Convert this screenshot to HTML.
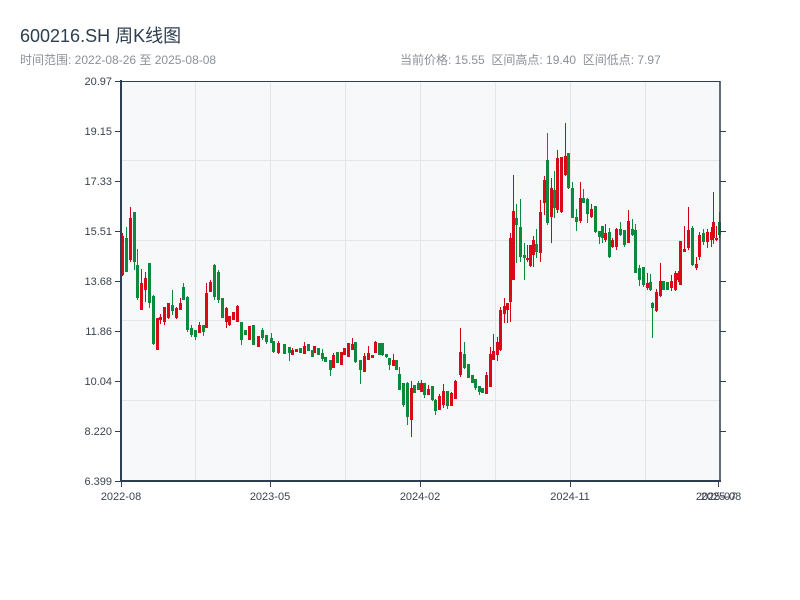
<!DOCTYPE html>
<html><head><meta charset="utf-8"><style>
html,body{margin:0;padding:0;background:#fff;width:800px;height:600px;overflow:hidden}
body{font-family:"Liberation Sans","Noto Sans CJK SC",sans-serif}
.t{position:absolute;left:20px;top:22px;font-size:18px;color:#2c3e50}
.s{position:absolute;top:51px;font-size:12px;color:#8a9199}
</style></head><body>
<div class="t">600216.SH 周K线图</div>
<div class="s" style="left:20px">时间范围: 2022-08-26 至 2025-08-08</div>
<div class="s" style="left:400px">当前价格: 15.55 &nbsp;区间高点: 19.40 &nbsp;区间低点: 7.97</div>
<svg width="800" height="600" style="position:absolute;left:0;top:0" xmlns="http://www.w3.org/2000/svg">
<rect x="121" y="81" width="599" height="400" fill="#f7f8fa"/>
<g stroke="#e2e5ea" stroke-width="1">
<line x1="195.5" y1="81" x2="195.5" y2="481"/><line x1="270.5" y1="81" x2="270.5" y2="481"/>
<line x1="345.5" y1="81" x2="345.5" y2="481"/><line x1="420.5" y1="81" x2="420.5" y2="481"/>
<line x1="495.5" y1="81" x2="495.5" y2="481"/><line x1="570.5" y1="81" x2="570.5" y2="481"/>
<line x1="645.5" y1="81" x2="645.5" y2="481"/>
<line x1="121" y1="160.5" x2="720" y2="160.5"/><line x1="121" y1="240.5" x2="720" y2="240.5"/>
<line x1="121" y1="320.5" x2="720" y2="320.5"/><line x1="121" y1="400.5" x2="720" y2="400.5"/>
</g>
<g fill="none" transform="translate(0.5,0)">
<path stroke="#d0021b" stroke-width="1" d="M122 233V276M130 207V262M141 269V310M145 272V302M157 318V350M160 314V324M164 307V325M168 303V319M176 307V319M180 298V310M199 322V333M206 283V328M210 280V292M226 307V328M229 316V326M233 312V320M237 305V322M249 326V340M258 336V347M278 341V354M292 348V355M296 349V352M304 342V354M314 346V353M333 353V368M341 352V365M344 348V355M348 343V357M352 338V350M364 353V372M368 346V360M372 355V358M375 341V353M393 354V366M411 381V437M421 380V392M428 385V395M439 394V410M443 384V408M451 392V406M455 380V399M460 328V377M486 372V394M490 347V387M493 334V360M497 337V361M500 307V351M504 298V323M507 303V323M510 233V322M513 175V280M527 245V262M530 245V267M533 236V267M540 200V262M544 176V215M551 178V243M557 150V213M561 157V213M565 123V176M580 182V223M591 204V218M605 224V242M612 238V248M616 228V250M628 210V243M647 273V290M656 289V312M660 263V297M671 275V291M675 271V291M678 271V282M680 241V285M684 226V252M688 207V250M696 257V270M699 232V260M707 229V248M711 227V247M713 192V244M716 226V241"/>
<path stroke="#d9091a" stroke-width="3" d="M122 236V275M130 218V260M141 283V310M145 278V290M157 318V350M160 317V320M164 307V322M168 303V318M176 308V318M180 303V310M199 325V333M206 293V328M210 282V292M226 308V322M229 316V325M233 312V320M237 306V322M249 326V340M258 336V347M278 343V353M292 350V355M296 349V352M304 346V354M314 346V353M333 355V368M341 352V365M344 348V355M348 343V357M352 344V350M364 356V372M368 353V360M372 355V358M375 342V353M393 360V366M411 388V420M421 383V392M428 389V395M439 396V410M443 391V405M451 393V406M455 381V399M460 352V375M486 375V394M490 354V387M493 351V360M497 342V355M500 310V350M504 306V314M507 303V310M510 238V302M513 211V280M527 258V260M530 245V266M533 240V255M540 212V253M544 180V203M551 188V217M557 158V210M561 157V212M565 156V175M580 198V221M591 209V217M605 233V240M612 240V247M616 229V247M628 221V243M647 283V288M656 292V311M660 281V296M671 281V288M675 273V290M678 273V280M680 241V285M684 249V252M688 230V248M696 264V268M699 235V257M707 232V242M711 232V240M713 222V238M716 238V240"/>
<path stroke="#0a8a3a" stroke-width="1" d="M126 227V272M134 212V270M137 249V300M149 263V308M153 295V345M172 290V315M183 283V300M187 296V332M191 325V337M195 330V340M203 325V336M214 264V300M218 270V303M222 298V318M241 322V345M245 330V335M253 325V345M262 328V340M266 335V344M271 333V343M273 341V353M284 344V354M289 347V361M300 348V353M308 344V351M312 350V357M318 348V355M322 349V361M325 357V362M330 360V376M337 352V363M355 342V363M360 360V384M379 343V355M382 343V356M386 354V358M389 358V370M396 360V370M399 367V390M403 383V407M407 382V425M414 385V393M418 381V390M424 383V398M432 386V401M435 399V415M447 391V409M464 342V369M468 364V378M472 375V383M475 379V390M479 386V395M482 388V393M516 204V263M520 199V262M524 243V280M536 229V258M547 133V225M554 171V218M568 153V189M572 182V218M576 209V231M583 189V203M587 198V223M595 206V233M599 231V244M602 226V243M609 228V258M620 222V236M624 230V247M632 219V236M635 224V273M639 265V286M643 267V287M650 274V291M652 302V338M663 281V290M667 282V290M692 226V266M703 229V245M719 212V238"/>
<path stroke="#0a8a3a" stroke-width="3" d="M126 238V272M134 212V262M137 265V298M149 263V303M153 296V344M172 305V311M183 287V300M187 297V330M191 328V335M195 330V337M203 325V332M214 265V297M218 272V300M222 298V318M241 322V340M245 330V335M253 325V345M262 330V338M266 335V342M271 338V343M273 341V352M284 344V354M289 347V353M300 348V353M308 344V351M312 350V357M318 348V355M322 353V359M325 357V362M330 360V370M337 352V363M355 342V362M360 360V370M379 343V355M382 343V355M386 354V357M389 358V365M396 360V370M399 374V390M403 383V405M407 383V417M414 385V393M418 383V390M424 383V395M432 386V400M435 400V411M447 391V406M464 354V368M468 364V378M472 375V383M475 379V388M479 386V392M482 388V393M516 218V225M520 227V257M524 255V258M536 244V252M547 160V223M554 190V208M568 153V188M572 188V218M576 217V222M583 198V203M587 199V214M595 206V232M599 231V237M602 226V238M609 232V257M620 229V235M624 230V245M632 229V235M635 230V273M639 268V280M643 267V285M650 282V290M652 303V308M663 281V290M667 282V290M692 228V265M703 233V242M719 222V235"/>
</g>
<g stroke="#2c3e50" stroke-width="2" fill="none">
<line x1="121" y1="80" x2="121" y2="482"/><line x1="120" y1="481" x2="721" y2="481"/>
<line x1="720" y1="81" x2="720" y2="481" stroke-width="1.5"/>
<line x1="121" y1="81.5" x2="720" y2="81.5" stroke-width="1"/>
</g>
<g stroke="#2c3e50" stroke-width="1">
<line x1="115" y1="81.5" x2="121" y2="81.5"/><line x1="115" y1="131.5" x2="121" y2="131.5"/>
<line x1="115" y1="181.5" x2="121" y2="181.5"/><line x1="115" y1="231.5" x2="121" y2="231.5"/>
<line x1="115" y1="281.5" x2="121" y2="281.5"/><line x1="115" y1="331.5" x2="121" y2="331.5"/>
<line x1="115" y1="381.5" x2="121" y2="381.5"/><line x1="115" y1="431.5" x2="121" y2="431.5"/>
<line x1="115" y1="481.5" x2="121" y2="481.5"/>
<line x1="720" y1="131.5" x2="726" y2="131.5"/><line x1="720" y1="181.5" x2="726" y2="181.5"/>
<line x1="720" y1="231.5" x2="726" y2="231.5"/><line x1="720" y1="281.5" x2="726" y2="281.5"/>
<line x1="720" y1="331.5" x2="726" y2="331.5"/><line x1="720" y1="381.5" x2="726" y2="381.5"/>
<line x1="720" y1="431.5" x2="726" y2="431.5"/>
<line x1="121.5" y1="481" x2="121.5" y2="487"/><line x1="270.5" y1="481" x2="270.5" y2="487"/>
<line x1="420.5" y1="481" x2="420.5" y2="487"/><line x1="570.5" y1="481" x2="570.5" y2="487"/>
<line x1="718.5" y1="481" x2="718.5" y2="487"/>
</g>
<g font-family="Liberation Sans, sans-serif" font-size="11" fill="#3a4450" text-anchor="end">
<text x="112" y="85">20.97</text><text x="112" y="135">19.15</text><text x="112" y="185">17.33</text>
<text x="112" y="235">15.51</text><text x="112" y="285">13.68</text><text x="112" y="335">11.86</text>
<text x="112" y="385">10.04</text><text x="112" y="435">8.220</text><text x="112" y="485">6.399</text>
</g>
<g font-family="Liberation Sans, sans-serif" font-size="11" fill="#3a4450" text-anchor="middle">
<text x="121" y="500">2022-08</text><text x="270" y="500">2023-05</text><text x="420" y="500">2024-02</text>
<text x="570" y="500">2024-11</text><text x="716" y="500">2025-07</text><text x="721" y="500">2025-08</text>
</g>
</svg>
</body></html>
